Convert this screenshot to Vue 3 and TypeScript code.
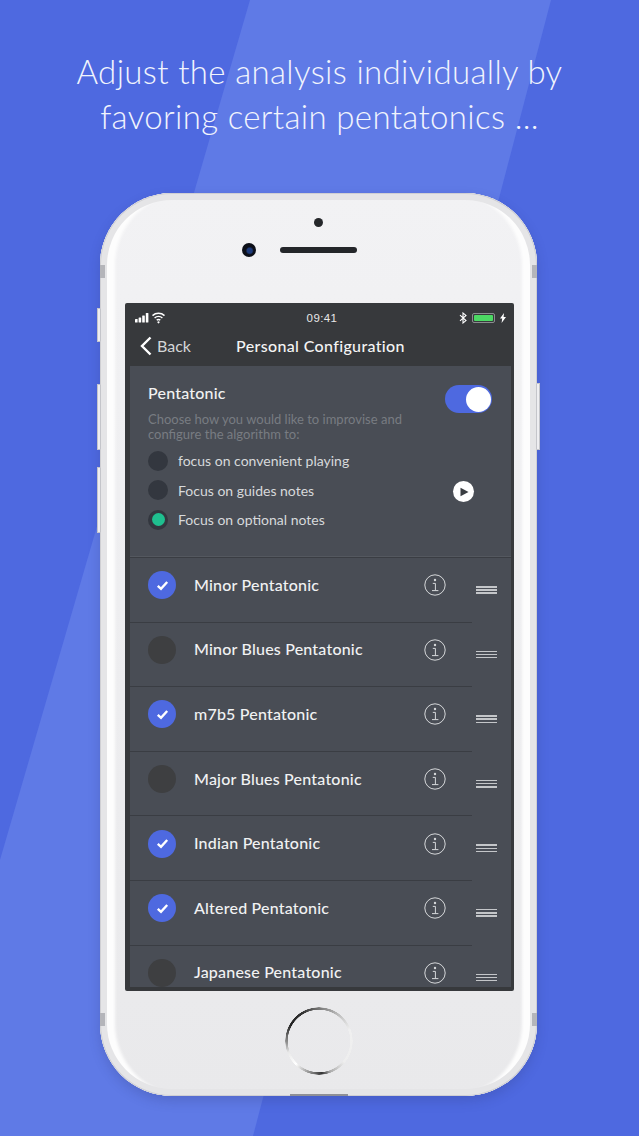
<template>
  <div class="page">
    <div class="stripe"></div>

    <h1 class="headline">Adjust the analysis individually by<br />favoring certain pentatonics ...</h1>

    <div class="phone">
      <span class="side-btn btn-mute"></span>
      <span class="side-btn btn-up"></span>
      <span class="side-btn btn-down"></span>
      <span class="side-btn btn-power"></span>
      <span class="band band-tl"></span>
      <span class="band band-tr"></span>
      <span class="band band-bl"></span>
      <span class="band band-br"></span>
      <span class="slot"></span>

      <div class="phone-top">
        <span class="sensor"></span>
        <div class="cam-row">
          <span class="camera"></span>
          <span class="speaker"></span>
        </div>
      </div>

      <div class="screen">
        <div class="topbar">
          <div class="status">
            <div class="status-left">
              <svg width="31" height="12" viewBox="0 0 31 12">
                <rect x="0" y="7" width="2.6" height="3.5" rx=".5" fill="#fff" />
                <rect x="3.6" y="5.5" width="2.6" height="5" rx=".5" fill="#fff" />
                <rect x="7.2" y="3.5" width="2.6" height="7" rx=".5" fill="#fff" />
                <rect x="10.8" y="1" width="2.6" height="9.5" rx=".5" fill="#fff" />
                <path d="M17.5 3.6a9 9 0 0 1 12 0M19.6 6a6 6 0 0 1 7.8 0M21.7 8.2a3 3 0 0 1 3.6 0" fill="none" stroke="#fff" stroke-width="1.5" />
                <circle cx="23.5" cy="10.3" r="1.1" fill="#fff" />
              </svg>
            </div>
            <span class="clock">09:41</span>
            <div class="status-right">
              <svg width="8" height="12" viewBox="0 0 8 12">
                <path d="M1 3.2l6 5.4L4 11V1l3 2.4-6 5.4" fill="none" stroke="#fff" stroke-width="1.1" />
              </svg>
              <span class="battery"><span class="battery-fill"></span></span>
              <svg width="6" height="10" viewBox="0 0 6 10">
                <path d="M4 0L0 5.6h2.2L1.6 10 6 4H3.6z" fill="#fff" />
              </svg>
            </div>
          </div>
          <div class="nav">
            <div class="back">
              <svg width="14" height="20" viewBox="0 0 14 20">
                <path d="M11.5 1.5L3 10l8.5 8.5" fill="none" stroke="#fff" stroke-width="2.4" />
              </svg>
              <span>Back</span>
            </div>
            <span class="nav-title">Personal Configuration</span>
          </div>
        </div>

        <div class="content">
          <section class="config">
            <div class="config-text">
              <div class="config-title">Pentatonic</div>
              <p class="config-desc">Choose how you would like to improvise and<br />configure the algorithm to:</p>
              <div v-for="opt in options" :key="opt.label" class="option">
                <span class="radio"><span v-if="opt.active" class="radio-dot"></span></span>
                <span class="option-label">{{ opt.label }}</span>
              </div>
            </div>
            <div class="config-side">
              <span class="toggle"><span class="knob"></span></span>
              <span class="play">
                <svg width="10" height="10" viewBox="0 0 10 10"><path d="M1.5 .8L9.5 5l-8 4.2z" fill="#3a3d42" /></svg>
              </span>
            </div>
          </section>

          <div class="list">
            <div v-for="row in rows" :key="row.name" class="row">
              <span class="check" :class="{ on: row.on }">
                <svg v-if="row.on" width="13" height="11" viewBox="0 0 13 11">
                  <path d="M1.8 5.8l3.2 3L11.2 2" fill="none" stroke="#fff" stroke-width="2.4" />
                </svg>
              </span>
              <span class="row-name">{{ row.name }}</span>
              <svg class="info" width="22" height="22" viewBox="0 0 22 22">
                <circle cx="11" cy="11" r="10.2" fill="none" stroke="#d6d8da" stroke-width="1" />
                <circle cx="11" cy="6" r="1.2" fill="#d6d8da" />
                <path d="M8.8 9.4h2.6v7M8 16.6h6.4" fill="none" stroke="#d6d8da" stroke-width="1" />
              </svg>
              <span class="handle"><i></i><i></i><i></i></span>
            </div>
          </div>
        </div>
      </div>

      <div class="phone-bottom">
        <span class="home"></span>
      </div>
    </div>
  </div>
</template>

<script setup lang="ts">
interface Option {
  label: string
  active: boolean
}

interface Row {
  name: string
  on: boolean
}

const options: Option[] = [
  { label: 'focus on convenient playing', active: false },
  { label: 'Focus on guides notes', active: false },
  { label: 'Focus on optional notes', active: true }
]

const rows: Row[] = [
  { name: 'Minor Pentatonic', on: true },
  { name: 'Minor Blues Pentatonic', on: false },
  { name: 'm7b5 Pentatonic', on: true },
  { name: 'Major Blues Pentatonic', on: false },
  { name: 'Indian Pentatonic', on: true },
  { name: 'Altered Pentatonic', on: true },
  { name: 'Japanese Pentatonic', on: false }
]
</script>

<style>
html,
body {
  margin: 0;
  background: #4e69e0;
}
</style>

<style scoped>
.page {
  position: relative;
  width: 639px;
  height: 1136px;
  overflow: hidden;
  background: #4e69e0;
  font-family: Lato, "Open Sans", sans-serif;
}

.stripe {
  position: absolute;
  inset: 0;
  background: #5f7ae6;
  clip-path: polygon(250px 0, 551px 0, 253px 1136px, 0 1136px, 0 860px);
}

.headline {
  position: relative;
  margin: 0;
  padding-top: 49px;
  height: 193px;
  box-sizing: border-box;
  text-align: center;
  color: #f1f4fd;
  font-size: 33px;
  font-weight: 300;
  line-height: 45px;
  letter-spacing: .35px;
}

.phone {
  position: relative;
  width: 437px;
  height: 903px;
  margin-left: 100px;
  box-sizing: border-box;
  padding: 0 23px 0 25px;
  display: flex;
  flex-direction: column;
  border-radius: 72px;
  background: linear-gradient(#f2f2f4, #e9e9eb);
  box-shadow:
    inset 0 0 0 1px #cfcfd3,
    inset 0 0 0 7px #e5e5e7,
    inset 15px 0 3px #fdfdfd,
    inset -15px 0 3px #fdfdfd,
    0 5px 12px rgba(40, 50, 110, .22);
}

.side-btn {
  position: absolute;
  width: 4px;
  background: #eeeef1;
  border-radius: 1px;
  box-shadow: inset 0 0 0 1px #c4c5ca;
}

.btn-mute { left: -3px; top: 115px; height: 34px; }
.btn-up { left: -3px; top: 191px; height: 66px; }
.btn-down { left: -3px; top: 274px; height: 66px; }
.btn-power { right: -3px; top: 190px; height: 67px; }

.band {
  position: absolute;
  width: 5px;
  height: 13px;
  background: #b4b5ba;
}

.band-tl { left: 0; top: 72px; }
.band-tr { right: 0; top: 72px; }
.band-bl { left: 0; bottom: 70px; }
.band-br { right: 0; bottom: 70px; }

.slot {
  position: absolute;
  left: 190px;
  bottom: 0;
  width: 58px;
  height: 2px;
  background: #8f9096;
}

.phone-top {
  height: 110px;
  display: flex;
  flex-direction: column;
  align-items: center;
  padding-top: 25px;
  box-sizing: border-box;
  flex: none;
}

.sensor {
  width: 9px;
  height: 9px;
  border-radius: 50%;
  background: #25272a;
  margin-right: 3px;
}

.cam-row {
  display: flex;
  align-items: center;
  gap: 24px;
  margin-top: 16px;
  margin-left: -40px;
}

.camera {
  width: 14px;
  height: 14px;
  border-radius: 50%;
  background: radial-gradient(circle at 55% 55%, #1d3a7a 0 2.5px, #0c0f18 4px);
}

.speaker {
  width: 77px;
  height: 6px;
  border-radius: 3px;
  background: #24262a;
}

.screen {
  width: 389px;
  height: 688px;
  flex: none;
  display: flex;
  flex-direction: column;
  overflow: hidden;
  background: #37393c;
  border-radius: 2px;
  color: #fff;
}

.topbar {
  height: 63px;
  flex: none;
  color: #fff;
}

.status {
  position: relative;
  height: 29px;
  display: flex;
  align-items: center;
  justify-content: space-between;
  padding: 0 8px 0 10px;
}

.status-left,
.status-right {
  display: flex;
  align-items: center;
  gap: 5px;
}

.clock {
  position: absolute;
  left: 5px;
  right: 0;
  top: 7px;
  text-align: center;
  font-family: "Liberation Sans", sans-serif;
  font-size: 11.5px;
  line-height: 16px;
  letter-spacing: .4px;
  color: #e8e8e8;
}

.battery {
  width: 23px;
  height: 10px;
  box-sizing: border-box;
  padding: 1px;
  border: 1px solid #8a8d8f;
  border-radius: 2px;
  display: flex;
}

.battery-fill {
  flex: 1;
  background: #4cd964;
  border-radius: 1px;
}

.nav {
  position: relative;
  height: 34px;
  box-sizing: border-box;
  padding: 0 0 7px 2px;
  display: flex;
  align-items: center;
  justify-content: center;
}

.back {
  position: absolute;
  left: 14px;
  top: 4px;
  display: flex;
  align-items: center;
  gap: 4px;
  font-size: 16px;
  line-height: 20px;
  color: #d4d6d8;
}

.nav-title {
  font-size: 16px;
  font-weight: 500;
  letter-spacing: .35px;
  color: #f4f4f4;
}

.content {
  flex: 1;
  min-height: 0;
  margin: 0 3px 4px 5px;
  background: #494d55;
  overflow: hidden;
}

.config {
  height: 192px;
  box-sizing: border-box;
  display: flex;
  justify-content: space-between;
  padding: 16px 19px 0 18px;
  border-bottom: 1px solid #3a3d43;
  box-shadow: inset 0 -4px 0 -3px #54585f;
}

.config-title {
  font-size: 16px;
  font-weight: 500;
  letter-spacing: .2px;
  line-height: 22px;
  color: #f2f2f2;
}

.config-desc {
  margin: 8px 0 4px;
  font-size: 13px;
  line-height: 15px;
  color: #787c82;
}

.option {
  display: flex;
  align-items: center;
  gap: 10px;
  height: 29.5px;
}

.radio {
  width: 20px;
  height: 20px;
  border-radius: 50%;
  background: #33373f;
  display: flex;
  align-items: center;
  justify-content: center;
}

.radio-dot {
  width: 13px;
  height: 13px;
  border-radius: 50%;
  background: #1fbf8f;
}

.option-label {
  font-size: 14px;
  color: #d7d9db;
}

.config-side {
  display: flex;
  flex-direction: column;
  align-items: flex-end;
}

.toggle {
  width: 47px;
  height: 28px;
  border-radius: 14px;
  background: #4e69e0;
  display: flex;
  align-items: center;
  justify-content: flex-end;
  padding-right: 1px;
  box-sizing: border-box;
  margin-top: 3px;
}

.knob {
  width: 25px;
  height: 25px;
  border-radius: 50%;
  background: #fff;
}

.play {
  width: 21px;
  height: 21px;
  border-radius: 50%;
  background: #fff;
  display: flex;
  align-items: center;
  justify-content: center;
  margin-top: 68px;
  margin-right: 18px;
}

.row {
  position: relative;
  height: 64.6px;
  box-sizing: border-box;
  display: flex;
  align-items: center;
  padding-left: 18px;
  margin-right: 39px;
  border-bottom: 1px solid #3a3d43;
}

.check {
  width: 28px;
  height: 28px;
  flex: none;
  border-radius: 50%;
  background: #3e3f41;
  display: flex;
  align-items: center;
  justify-content: center;
  margin-bottom: 9px;
}

.check.on {
  background: #4e69e0;
}

.row-name {
  flex: 1;
  margin-left: 18px;
  margin-bottom: 11px;
  font-size: 16px;
  font-weight: 500;
  letter-spacing: .2px;
  color: #f1f2f3;
}

.info {
  margin-right: 26px;
  margin-bottom: 9px;
}

.handle {
  position: absolute;
  right: -25px;
  top: 28px;
  width: 21px;
  display: flex;
  flex-direction: column;
  gap: 1.7px;
}

.handle i {
  display: block;
  height: 1.5px;
  background: #c4c6c9;
}

.phone-bottom {
  flex: 1;
  display: flex;
  justify-content: center;
  padding: 16px 2px 0 0;
}

.home {
  width: 68px;
  height: 68px;
  border-radius: 50%;
  box-sizing: border-box;
  background: conic-gradient(#777 0deg, #bbb 35deg, #f0f0f0 70deg, #eee 130deg, #aaa 160deg, #333 175deg, #888 195deg, #fff 225deg, #e8e8e8 250deg, #999 265deg, #222 300deg, #333 330deg, #777 360deg);
  -webkit-mask: radial-gradient(circle, transparent 31px, #000 31.5px, #000 33.5px, transparent 34px);
  mask: radial-gradient(circle, transparent 31px, #000 31.5px, #000 33.5px, transparent 34px);
}
</style>
